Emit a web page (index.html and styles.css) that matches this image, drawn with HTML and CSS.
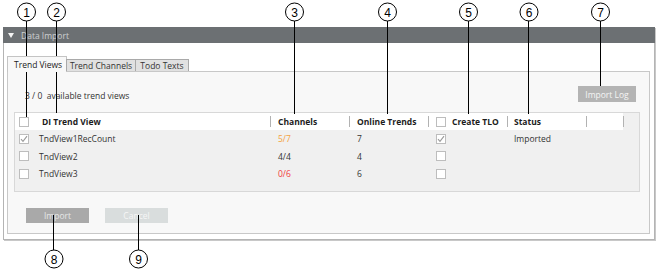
FILE: index.html
```html
<!DOCTYPE html>
<html>
<head>
<meta charset="utf-8">
<link rel="stylesheet" href="styles.css">
</head>
<body>
<div class="page">
  <section class="panel">
    <header class="panel-head">
      <svg class="caret" width="6" height="5" viewBox="0 0 6 5"><polygon points="0,0 6,0 3,5" fill="#f4f4f4"/></svg>
      <span>Data Import</span>
    </header>
    <div class="panel-body">
      <div class="tabs">
        <div class="tab active">Trend Views</div>
        <div class="tab">Trend Channels</div>
        <div class="tab">Todo Texts</div>
      </div>
      <div class="tab-content">
        <div class="toolbar">
          <span class="count">3 / 0&nbsp; available trend views</span>
          <button class="btn btn-log">Import Log</button>
        </div>
        <div class="grid">
          <div class="row head">
            <div class="cell c1"><span class="cb"></span></div>
            <div class="cell c2 hd">DI Trend View</div>
            <div class="cell c3"><span class="sep"></span>Channels</div>
            <div class="cell c4"><span class="sep"></span>Online Trends</div>
            <div class="cell c5"><span class="sep"></span><span class="cb"></span><span class="lbl">Create TLO</span></div>
            <div class="cell c6"><span class="sep"></span>Status</div>
            <div class="cell c7"><span class="sep"></span></div>
            <div class="cell c8"><span class="sep"></span></div>
          </div>
          <div class="row">
            <div class="cell c1"><span class="cb checked"><svg width="8" height="8" viewBox="0 0 8 8"><polyline points="1,4.2 3,6.4 7,1.2" fill="none" stroke="#9a9a9a" stroke-width="1.1"/></svg></span></div>
            <div class="cell c2">TndView1RecCount</div>
            <div class="cell c3 warn">5/7</div>
            <div class="cell c4">7</div>
            <div class="cell c5"><span class="cb checked"><svg width="8" height="8" viewBox="0 0 8 8"><polyline points="1,4.2 3,6.4 7,1.2" fill="none" stroke="#9a9a9a" stroke-width="1.1"/></svg></span></div>
            <div class="cell c6">Imported</div>
          </div>
          <div class="row">
            <div class="cell c1"><span class="cb"></span></div>
            <div class="cell c2">TndView2</div>
            <div class="cell c3">4/4</div>
            <div class="cell c4">4</div>
            <div class="cell c5"><span class="cb"></span></div>
            <div class="cell c6"></div>
          </div>
          <div class="row">
            <div class="cell c1"><span class="cb"></span></div>
            <div class="cell c2">TndView3</div>
            <div class="cell c3 err">0/6</div>
            <div class="cell c4">6</div>
            <div class="cell c5"><span class="cb"></span></div>
            <div class="cell c6"></div>
          </div>
        </div>
        <div class="actions">
          <button class="btn btn-import">Import</button>
          <button class="btn btn-cancel">Cancel</button>
        </div>
      </div>
    </div>
  </section>

  <svg class="callouts" width="658" height="275" viewBox="0 0 658 275">
    <g stroke="#000" stroke-width="1" fill="none">
      <line x1="26.5" y1="21" x2="26.5" y2="117"/>
      <line x1="56.5" y1="21" x2="56.5" y2="113"/>
      <line x1="294.5" y1="21" x2="294.5" y2="114"/>
      <line x1="387.5" y1="21" x2="387.5" y2="114"/>
      <line x1="468.5" y1="21" x2="468.5" y2="114"/>
      <line x1="528.5" y1="21" x2="528.5" y2="114"/>
      <line x1="600.5" y1="21" x2="600.5" y2="86"/>
      <line x1="53.5" y1="215" x2="53.5" y2="250"/>
      <line x1="138.5" y1="215" x2="138.5" y2="250"/>
    </g>
    <g stroke="#000" stroke-width="1" fill="#fff">
      <circle cx="26.5" cy="12" r="9"/>
      <circle cx="56.5" cy="12" r="9"/>
      <circle cx="294.5" cy="12" r="9"/>
      <circle cx="387.5" cy="12" r="9"/>
      <circle cx="468.5" cy="12" r="9"/>
      <circle cx="529" cy="12" r="9"/>
      <circle cx="600.5" cy="12" r="9"/>
      <circle cx="54" cy="259" r="9"/>
      <circle cx="138.5" cy="259" r="9"/>
    </g>
    <g class="nums" text-anchor="middle">
      <text x="26.5" y="16.5">1</text>
      <text x="56.5" y="16.5">2</text>
      <text x="294.5" y="16.5">3</text>
      <text x="387.5" y="16.5">4</text>
      <text x="468.5" y="16.5">5</text>
      <text x="529" y="16.5">6</text>
      <text x="600.5" y="16.5">7</text>
      <text x="54" y="263.5">8</text>
      <text x="138.5" y="263.5">9</text>
    </g>
  </svg>
</div>
</body>
</html>
```

FILE: styles.css
```css
* { box-sizing: border-box; }
html, body { margin: 0; padding: 0; background: #fff; }
body {
  font-family: "Open Sans", "Noto Sans", sans-serif;
  font-size: 8.5px;
  color: #333;
}
.page {
  position: relative;
  width: 658px;
  height: 275px;
  padding-top: 27px;
  padding-left: 3px;
}
.panel {
  width: 652px;
  box-shadow: 1px 1px 0 #c8c8c8;
}
.panel-head {
  height: 16px;
  background: #6c7073;
  color: #cfd1d2;
  display: flex;
  align-items: center;
  padding-left: 5px;
  gap: 7px;
  font-size: 8.5px;
}
.caret { display: block; }
.panel-body {
  background: #fff;
  border: 1px solid #b4b4b4;
  border-top: none;
  padding: 13px 4px 5px 3px;
}
.tabs {
  display: flex;
  align-items: flex-end;
  height: 15px;
  position: relative;
  z-index: 1;
}
.tab {
  height: 12px;
  line-height: 11px;
  padding: 0;
  text-align: center;
  white-space: nowrap;
  background: #e1e1e1;
  border: 1px solid #a9a9a9;
  border-bottom: none;
  color: #333;
}
.tab + .tab { margin-left: -1px; }
.tab.active {
  height: 16px;
  margin-bottom: -1px;
  line-height: 15px;
  width: 60px;
  text-align: left;
  padding: 0 0 0 6px;
  background: #f8f8f8;
  border-color: #c4c4c4;
  color: #222;
}
.tab:nth-child(2) { width: 70px; }
.tab:nth-child(3) { width: 54px; }
.tab-content {
  background: #f8f8f8;
  border: 1px solid #c8c8c8;
  padding: 14px 13px 10px 6px;
}
.toolbar {
  display: flex;
  justify-content: space-between;
  align-items: center;
  height: 16px;
}
.count { padding-left: 11px; padding-top: 3px; }
.btn {
  font-family: inherit;
  font-size: 8.5px;
  border: none;
  padding: 0;
  height: 16px;
  color: #f4f4f4;
}
.btn-log { width: 58px; background: #b4b4b4; }
.grid {
  margin-top: 10px;
  margin-right: -4px;
  height: 80px;
  border: 1px solid #d8d8d8;
  background: #f0f0f0;
}
.row {
  display: grid;
  grid-template-columns: 20px 235px 79px 79px 79px 79px 37px 1fr;
  height: 17.5px;
  align-items: center;
}
.row.head {
  height: 17px;
  font-weight: 700;
  color: #1c1c1c;
}
.row.head .cell { background: #fff; height: 100%; }
.row.head .c8 { background: transparent; }
.cell {
  display: flex;
  align-items: center;
  white-space: nowrap;
  overflow: hidden;
}
.c1 { padding-left: 4px; }
.c2 { padding-left: 4px; }
.c2.hd { padding-left: 7px; }
.c3, .c4 { padding-left: 8px; }
.head .c3, .head .c4, .head .c5, .head .c6, .head .c7, .head .c8 { padding-left: 0; }
.c5 { padding-left: 8px; }
.c6 { padding-left: 7px; }
.sep {
  display: inline-block;
  width: 1px;
  height: 11px;
  background: #b2b2b2;
  margin-right: 7px;
  flex: none;
}
.head .c6 .sep { margin-right: 6px; }
.lbl { margin-left: 6px; }
.cb {
  display: inline-flex;
  align-items: center;
  justify-content: center;
  width: 10px;
  height: 10px;
  background: #fff;
  border: 1px solid #bdbdbd;
  flex: none;
}
.cb svg { display: block; }
.warn { color: #f4a23c; }
.err { color: #f03a3a; }
.actions {
  display: flex;
  gap: 16px;
  margin-top: 16px;
  padding-left: 12px;
}
.btn-import { width: 63px; height: 15px; background: #a9a9a9; color: #e6e6e6; }
.btn-cancel { width: 63px; height: 15px; background: #d9dddd; color: #f6f6f6; }
.callouts {
  position: absolute;
  left: 0;
  top: 0;
  pointer-events: none;
}
.nums {
  font-family: "Liberation Sans", Arial, sans-serif;
  font-size: 12px;
  fill: #000;
}
```
